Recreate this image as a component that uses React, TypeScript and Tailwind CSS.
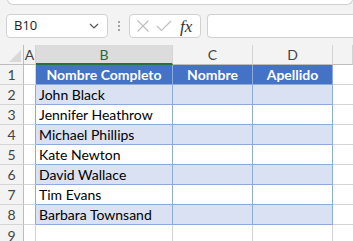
import React from "react"

const rows = [
  "John Black",
  "Jennifer Heathrow",
  "Michael Phillips",
  "Kate Newton",
  "David Wallace",
  "Tim Evans",
  "Barbara Townsand",
]

const cellFont = { fontFamily: "Lato, 'Open Sans', sans-serif" }

function ColHeader({ label, selected }: { label: string; selected?: boolean }) {
  return (
    <div
      className={`flex items-center justify-center border-r border-[#d4d4d4] text-[14px] ${
        selected
          ? "bg-[#dcdcdc] text-[#1d6b3f] border-b-2 border-b-[#217346]"
          : "bg-[#f3f3f3] text-[#444] border-b border-b-[#bdbdbd]"
      }`}
      style={cellFont}
    >
      {label}
    </div>
  )
}

export default function App() {
  return (
    <div className="w-[353px] h-[241px] overflow-hidden bg-[#f3f3f3] select-none" style={{ fontFamily: "'Open Sans', 'Noto Sans', sans-serif" }}>
      {/* top box edge */}
      <div className="h-[4px] ml-[7px] -mt-[10px] pt-[10px] box-content rounded-b-[6px] border border-t-0 border-[#d0d0d0] bg-white" />

      {/* formula bar */}
      <div className="flex items-center h-[24px] mt-[9px] ml-[6px]">
        <div className="w-[102px] h-[24px] flex items-center justify-between rounded-[4px] border border-[#d1d1d1] bg-white pl-[7px] pr-[8px] text-[13px] text-[#222]">
          <span>B10</span>
          <svg width="10" height="6" viewBox="0 0 10 6" fill="none" stroke="#555" strokeWidth="1.2">
            <path d="M1 1l4 4 4-4" />
          </svg>
        </div>
        <div className="w-[21px] flex flex-col items-center gap-[2px]">
          <span className="w-[2px] h-[2px] bg-[#888] rounded-full" />
          <span className="w-[2px] h-[2px] bg-[#888] rounded-full" />
          <span className="w-[2px] h-[2px] bg-[#888] rounded-full" />
        </div>
        <div className="w-[72px] h-[24px] flex items-center rounded-[4px] border border-[#d1d1d1] bg-white pl-[6px] gap-[6px]">
          <svg width="14" height="14" viewBox="0 0 14 14" stroke="#bdbdbd" strokeWidth="1.1" fill="none">
            <path d="M1.5 1.5l11 11M12.5 1.5l-11 11" />
          </svg>
          <svg width="16" height="12" viewBox="0 0 16 12" stroke="#bdbdbd" strokeWidth="1.1" fill="none">
            <path d="M1 6l4.5 4.5L15 1" />
          </svg>
          <span className="text-[17px] italic text-[#333] leading-none ml-[2px]" style={{ fontFamily: "'Liberation Serif', serif" }}>
            fx
          </span>
        </div>
        <div className="flex-1 ml-[6px] h-[24px] rounded-l-[4px] border border-r-0 border-[#d1d1d1] bg-white" />
      </div>

      {/* grid */}
      <div className="mt-[7px] grid grid-cols-[24px_12px_137px_80px_80px_20px] grid-rows-[20px_repeat(9,20px)] bg-white">
        {/* corner */}
        <div className="relative bg-[#f3f3f3] border-r border-b border-[#bdbdbd]">
          <div className="absolute right-[2px] bottom-[2px] w-0 h-0 border-l-[12px] border-l-transparent border-b-[12px] border-b-[#d9d9d9]" />
        </div>
        <ColHeader label="A" />
        <ColHeader label="B" selected />
        <ColHeader label="C" />
        <ColHeader label="D" />
        <ColHeader label="" />

        {/* row 1 */}
        <div className="flex items-center justify-center bg-[#f3f3f3] border-r border-b border-r-[#bdbdbd] border-b-[#d4d4d4] text-[14px] text-[#444]" style={cellFont}>1</div>
        <div className="border-r border-b border-[#d4d4d4]" />
        <div className="bg-[#4472c4] border-r border-b border-[#8ea9db] text-white font-bold text-[14px] flex items-center justify-center" style={cellFont}>Nombre Completo</div>
        <div className="bg-[#4472c4] border-r border-b border-[#8ea9db] text-white font-bold text-[14px] flex items-center justify-center" style={cellFont}>Nombre</div>
        <div className="bg-[#4472c4] border-r border-b border-[#8ea9db] text-white font-bold text-[14px] flex items-center justify-center" style={cellFont}>Apellido</div>
        <div className="border-b border-[#d4d4d4]" />

        {rows.map((name, i) => {
          const band = i % 2 === 0 ? "bg-[#d9e1f2]" : "bg-white"
          return (
            <React.Fragment key={name}>
              <div className="flex items-center justify-center bg-[#f3f3f3] border-r border-b border-r-[#bdbdbd] border-b-[#d4d4d4] text-[14px] text-[#444]" style={cellFont}>{i + 2}</div>
              <div className="border-r border-[#8ea9db] border-b border-b-[#d4d4d4]" />
              <div className={`${band} border-r border-b border-[#8ea9db] text-[14px] text-black flex items-center pl-[3px]`} style={cellFont}>{name}</div>
              <div className={`${band} border-r border-b border-[#8ea9db]`} />
              <div className={`${band} border-r border-b border-[#8ea9db]`} />
              <div className="border-b border-[#d4d4d4]" />
            </React.Fragment>
          )
        })}

        {/* row 9 */}
        <div className="flex items-center justify-center bg-[#f3f3f3] border-r border-r-[#bdbdbd] text-[14px] text-[#444]" style={cellFont}>9</div>
        <div className="border-r border-[#d4d4d4]" />
        <div className="border-r border-[#d4d4d4]" />
        <div className="border-r border-[#d4d4d4]" />
        <div className="border-r border-[#d4d4d4]" />
        <div />
      </div>
    </div>
  )
}
